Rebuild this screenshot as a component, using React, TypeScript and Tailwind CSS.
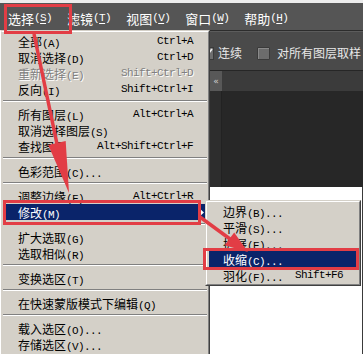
import React from "react";

const CJK = "font-['Noto_Sans_CJK_SC',sans-serif]";
const MONO = "font-['Liberation_Mono',monospace] text-[11px] tracking-[-0.6px]";

function Runs({ text }: { text: string }) {
  const parts = text.match(/[\u4e00-\u9fff]+|[^\u4e00-\u9fff]+/g) || [];
  return (
    <>
      {parts.map((p, i) =>
        /[\u4e00-\u9fff]/.test(p) ? (
          <span key={i} className={`${CJK} text-[12px]`}>
            {p}
          </span>
        ) : (
          <span key={i} className={MONO}>
            {p}
          </span>
        )
      )}
    </>
  );
}

type Item =
  | { l: string; s?: string; disabled?: boolean; active?: boolean; sub?: boolean }
  | "sep";

const mainItems: Item[] = [
  { l: "全部(A)", s: "Ctrl+A" },
  { l: "取消选择(D)", s: "Ctrl+D" },
  { l: "重新选择(E)", s: "Shift+Ctrl+D", disabled: true },
  { l: "反向(I)", s: "Shift+Ctrl+I" },
  "sep",
  { l: "所有图层(L)", s: "Alt+Ctrl+A" },
  { l: "取消选择图层(S)" },
  { l: "查找图层", s: "Alt+Shift+Ctrl+F" },
  "sep",
  { l: "色彩范围(C)..." },
  "sep",
  { l: "调整边缘(F)...", s: "Alt+Ctrl+R" },
  { l: "修改(M)", active: true, sub: true },
  "sep",
  { l: "扩大选取(G)" },
  { l: "选取相似(R)" },
  "sep",
  { l: "变换选区(T)" },
  "sep",
  { l: "在快速蒙版模式下编辑(Q)" },
  "sep",
  { l: "载入选区(O)..." },
  { l: "存储选区(V)..." },
];

const subItems: Item[] = [
  { l: "边界(B)..." },
  { l: "平滑(S)..." },
  { l: "扩展(E)..." },
  { l: "收缩(C)...", active: true },
  { l: "羽化(F)...", s: "Shift+F6" },
];

function MenuRow({ item, pr }: { item: Item; pr: string }) {
  if (item === "sep")
    return (
      <div className="h-[9px] flex flex-col pt-[3px] -mx-[1px]">
        <div className="h-px bg-[#808080]" />
        <div className="h-px bg-white" />
      </div>
    );
  const color = item.active
    ? "bg-[#0a246a] text-white"
    : item.disabled
    ? "text-[#808080] [text-shadow:1px_1px_0_#ffffff]"
    : "text-black";
  return (
    <div
      className={`h-[16px] flex items-center whitespace-nowrap leading-none pl-[14px] ${
        item.sub ? "pr-[2px]" : pr
      } ${color}`}
    >
      <span>
        <Runs text={item.l} />
      </span>
      <span className="flex-1" />
      {item.s && <span className={MONO}>{item.s}</span>}
      {item.sub && (
        <svg width="5" height="9" viewBox="0 0 5 9" className="block">
          <polygon points="0,0 5,4.5 0,9" fill="#ffffff" />
        </svg>
      )}
    </div>
  );
}

function TopItem({ cn, key1 }: { cn: string; key1: string }) {
  return (
    <span className="flex items-center whitespace-nowrap leading-none text-white">
      <span className={`${CJK} text-[13px]`}>{cn}</span>
      <span className={MONO}>
        (<span className="underline underline-offset-2">{key1}</span>)
      </span>
    </span>
  );
}

export default function App() {
  return (
    <div className="relative w-[363px] h-[354px] overflow-hidden bg-white flex flex-col">
      {/* top strip */}
      <div className="h-[3px] bg-[#ececec] shrink-0" />
      {/* menu bar */}
      <div className="h-[27px] shrink-0 bg-[#555555] flex items-center pl-[8px] pt-[4px] gap-[15px]">
        <TopItem cn="选择" key1="S" />
        <TopItem cn="滤镜" key1="T" />
        <TopItem cn="视图" key1="V" />
        <TopItem cn="窗口" key1="W" />
        <TopItem cn="帮助" key1="H" />
      </div>
      <div className="h-px shrink-0 bg-[#2c2c2c]" />
      {/* options bar */}
      <div className="h-[39px] shrink-0 bg-[#4a4a4a] border-t border-[#5c5c5c] flex items-center pl-[201px] pt-[4px] text-[#e8e8e8]">
        <div className="w-[13px] h-[13px] bg-[#6e6e6e] border border-[#3a3a3a] flex items-center justify-center">
          <svg width="11" height="11" viewBox="0 0 11 11">
            <path d="M2 5.5 L4.5 8 L10 1" stroke="#eeeeee" strokeWidth="1.8" fill="none" />
          </svg>
        </div>
        <span className={`${CJK} text-[12px] leading-none ml-[4px]`}>连续</span>
        <div className="w-[13px] h-[13px] ml-[15px] bg-[#6c6c6c] border border-[#3a3a3a] rounded-[1px] shadow-[inset_1px_1px_0_#8a8a8a]" />
        <span className={`${CJK} text-[12px] leading-none ml-[7px] whitespace-nowrap`}>对所有图层取样</span>
      </div>
      <div className="h-px shrink-0 bg-[#262626]" />
      {/* tab bar */}
      <div className="h-[20px] shrink-0 bg-[#3b3b3b] flex pl-[210px]">
        <div className="w-[12px] bg-[#585858] text-[#cfcfcf] text-[9px] leading-none flex items-center justify-center font-['DejaVu_Sans',sans-serif]">
          «
        </div>
      </div>
      {/* canvas */}
      <div className="h-[96px] shrink-0 bg-[#272727] flex pl-[210px]">
        <div className="w-[12px] bg-[#2d2d2d] border-r border-[#222222]" />
      </div>
      {/* document */}
      <div className="flex-1 bg-white border-r border-[#3a3a3a]" />

      {/* main dropdown */}
      <div className="absolute left-0 top-[30px] w-[210px] h-[340px] border border-l-white border-t-[#d4d0c8] border-r-[#404040] border-b-[#404040] bg-[#d4d0c8]">
        <div className="h-full border border-l-[#d4d0c8] border-t-white border-r-[#808080] border-b-[#808080] px-[2px] pt-[1px]">
          {mainItems.map((it, i) => (
            <MenuRow key={i} item={it} pr="pr-[13px]" />
          ))}
        </div>
      </div>

      {/* submenu */}
      <div className="absolute left-[205px] top-[200px] w-[156px] border border-l-[#d4d0c8] border-t-[#d4d0c8] border-r-[#404040] border-b-[#404040] bg-[#d4d0c8]">
        <div className="border border-l-white border-t-white border-r-[#808080] border-b-[#808080] px-[2px] py-[1px]">
          {subItems.map((it, i) => (
            <MenuRow key={i} item={it} pr="pr-[14px]" />
          ))}
        </div>
      </div>

      {/* red annotation boxes */}
      <div className="absolute left-[4px] top-[4px] w-[68px] h-[30px] border-[3px] border-[#e23d45]" />
      <div className="absolute left-[3px] top-[200px] w-[198px] h-[25px] border-[3px] border-[#e23d45]" />
      <div className="absolute left-[203px] top-[248px] w-[156px] h-[22px] border-[3px] border-[#e23d45]" />

      {/* red arrows */}
      <svg
        className="absolute left-0 top-0 pointer-events-none"
        width="363"
        height="354"
        viewBox="0 0 363 354"
      >
        <line x1="34" y1="34" x2="57" y2="144" stroke="#e23d45" strokeWidth="3.5" />
        <polygon points="65.7,140.9 69,193 48.3,145.1" fill="#e23d45" />
        <line x1="200" y1="217" x2="230" y2="239" stroke="#e23d45" strokeWidth="3.5" />
        <polygon points="234.2,232.4 248,252 224.6,245.2" fill="#e23d45" />
      </svg>
    </div>
  );
}
